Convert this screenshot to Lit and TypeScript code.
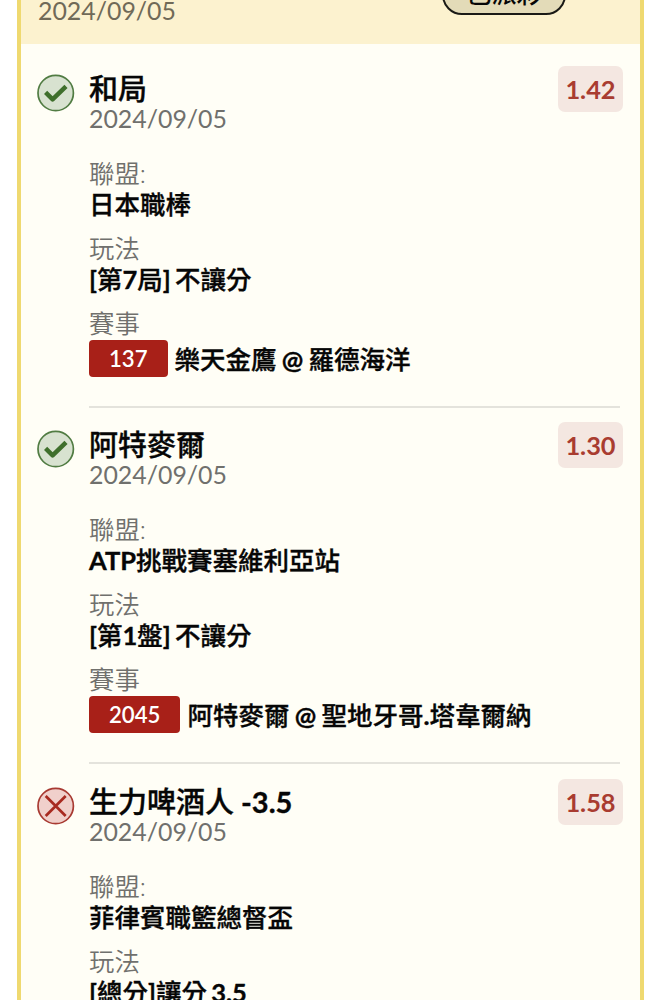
import { LitElement, html, css, svg } from 'lit';
import { customElement } from 'lit/decorators.js';

interface Bet {
  won: boolean;
  pick: string;
  odds: string;
  league: string;
  play: string;
  code: string;
  match: string;
}

const BETS: Bet[] = [
  { won: true, pick: '和局', odds: '1.42', league: '日本職棒', play: '[第7局] 不讓分', code: '137', match: '樂天金鷹 @ 羅德海洋' },
  { won: true, pick: '阿特麥爾', odds: '1.30', league: 'ATP挑戰賽塞維利亞站', play: '[第1盤] 不讓分', code: '2045', match: '阿特麥爾 @ 聖地牙哥.塔韋爾納' },
  { won: false, pick: '生力啤酒人 -3.5', odds: '1.58', league: '菲律賓職籃總督盃', play: '[總分]讓分 3.5', code: '', match: '' },
];

@customElement('app-root')
export class AppRoot extends LitElement {
  static styles = css`
    :host { display: block; height: 1000px; overflow: hidden; background: #fff; color: #060606;
      font-family: Lato, "Noto Sans CJK TC", sans-serif; }
    * { box-sizing: border-box; }
    .slip { margin: 0 28px 0 17px; height: 1000px; overflow: hidden; background: #fffef6;
      border: solid #efd970; border-width: 0 4px; }
    .head { height: 44px; background: #fcf2cf; display: flex; justify-content: space-between;
      align-items: flex-end; padding: 0 74px 0 17px; }
    .head .date { margin-bottom: 20px; color: #706a58; }
    .status { width: 124px; height: 40px; margin-bottom: 29px; border: 2px solid #1a1a16; border-radius: 20px;
      background: #e3dbb8; font-size: 25px; line-height: 33px; text-align: center; font-weight: 500; }
    .date { color: #70706d; font-size: 24.9px; line-height: 28px; white-space: nowrap; }
    .bet { display: flex; height: 356.4px; padding: 22px 17px 0 15px; }
    .icon { width: 40px; height: 40px; margin-top: 7px; flex: none; }
    .body { flex: 1; height: 342px; margin: 0 3px 0 13px; border-bottom: 2px solid #e4e3dc; }
    .top { display: flex; justify-content: space-between; height: 88px; margin-right: -3px; }
    .pick, .value, .match { font-family: Lato, "Noto Sans CJK TC Medium", "Noto Sans CJK TC", sans-serif;
      font-weight: 700; -webkit-text-stroke: 0.35px currentColor; }
    .pick { font-size: 29px; line-height: 34px; padding-top: 6px; white-space: nowrap; }
    .pick + .date { margin-top: -2px; }
    .odds { width: 65px; height: 46px; border-radius: 7px; background: #f4e7e1; color: #a93c30;
      font-size: 25.4px; font-weight: 700; line-height: 46px; text-align: center; }
    .label { color: #70706d; font-size: 25.4px; font-weight: 350; line-height: 31px; padding-top: 4px; }
    .value { font-size: 25.5px; line-height: 30px; height: 40px; word-spacing: -2px; white-space: nowrap; }
    .match { display: flex; align-items: center; gap: 7px; font-size: 25.5px; line-height: 39px; padding-top: 1px;
      word-spacing: -1px; white-space: nowrap; }
    .code { height: 37px; padding: 0 20px; border-radius: 4px; background: #a82018; color: #fff;
      font-size: 22.2px; font-weight: 600; line-height: 37px; margin-bottom: 2px; -webkit-text-stroke: 0; }
  `;

  private icon(won: boolean) {
    return won
      ? svg`<svg class="icon" viewBox="0 0 40 40"><circle cx="19.700" cy="20" r="17.700" fill="#d8e2d0" stroke="#517c43" stroke-width="1.700"/><path d="M9.600 19.400l7 7L30 13.400" fill="none" stroke="#3f6f2c" stroke-width="4.500" stroke-linejoin="round"/></svg>`
      : svg`<svg class="icon" viewBox="0 0 40 40"><circle cx="19.700" cy="20" r="17.700" fill="#f0d0cb" stroke="#a83a32" stroke-width="1.700"/><path d="M9.700 10l20 20M29.700 10l-20 20" fill="none" stroke="#a82a20" stroke-width="2.700"/></svg>`;
  }

  render() {
    return html`<div class="slip">
      <div class="head"><div class="date">2024/09/05</div><div class="status">已派彩</div></div>
      ${BETS.map((b) => html`<div class="bet">
        ${this.icon(b.won)}
        <div class="body">
          <div class="top"><div><div class="pick">${b.pick}</div><div class="date">2024/09/05</div></div><div class="odds">${b.odds}</div></div>
          <div class="label">聯盟:</div><div class="value">${b.league}</div>
          <div class="label">玩法</div><div class="value">${b.play}</div>
          ${b.match ? html`<div class="label">賽事</div><div class="match"><span class="code">${b.code}</span><span>${b.match}</span></div>` : null}
        </div>
      </div>`)}
    </div>`;
  }
}
